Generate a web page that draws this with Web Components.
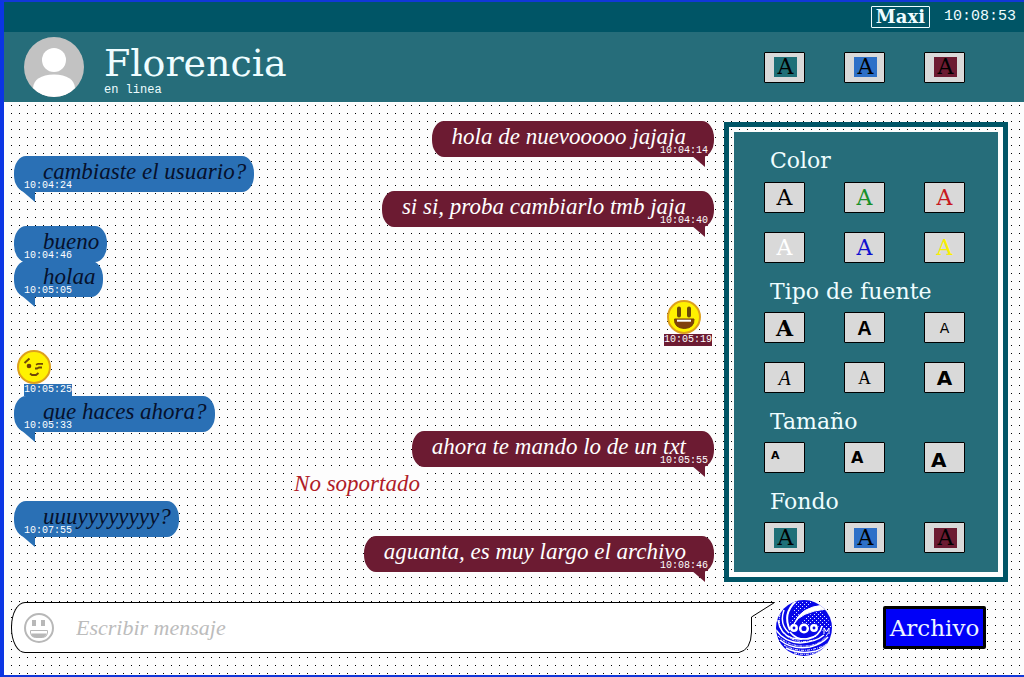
<!DOCTYPE html>
<html lang="es">
<head>
<meta charset="utf-8">
<meta name="viewport" content="width=device-width, initial-scale=1">
<title>Chat - Florencia</title>
<style>
  html, body { margin: 0; }
  body {
    --bar: #005566;
    --teal: #266d7a;
    --sent: #6c1b32;
    --received: #2a70b5;
    --pale: #effdff;
    --wide: "DejaVu Serif", serif;
    --hand: "Liberation Serif", serif;
    --mono: "Liberation Mono", monospace;
    font-family: var(--wide);
  }
</style>
</head>
<body>
<chat-app></chat-app>

<script>
class Base extends HTMLElement {
  connectedCallback() {
    if (this.shadowRoot) return;
    this.attachShadow({ mode: 'open' }).innerHTML =
      '<style>:host,*{box-sizing:border-box}' + this.styles() + '</style>' + this.markup();
  }
}

/* Small grey button that previews a colour, font, size or background */
class StyleButton extends Base {
  styles() {
    return `
    :host { display: block; }
    button { display: flex; align-items: center; justify-content: center; width: 41px; height: 31px; padding: 0;
      border: 1px solid #000; border-radius: 1px; background: #d9d9d9; color: var(--ink, #000);
      font: 22px/20px var(--wide); cursor: pointer; }
    button.fill span { background: var(--fill); width: 23px; height: 20px; text-align: center; margin-left: 2px; }
    button.f-wide { font-weight: bold; }
    button.f-sans { font: bold 20px/20px "Liberation Sans", sans-serif; }
    button.f-thin { font: 14px/20px "DejaVu Sans", sans-serif; }
    button.f-hand { font: italic 20px/20px var(--hand); }
    button.f-mono { font: 18px/20px "Liberation Serif", serif; }
    button.f-bold { font: bold 20px/20px "DejaVu Sans", sans-serif; }
    button.size { justify-content: flex-start; align-items: flex-start; padding: 7px 6px; font: bold 11px/11px "DejaVu Sans", sans-serif; }
    button.mid { font-size: 16px; line-height: 16px; }
    button.big { font-size: 20px; line-height: 20px; }`;
  }
  markup() {
    return `<button type="button" class="${this.getAttribute('kind') || ''}" aria-label="${this.getAttribute('label')}"><span>A</span></button>`;
  }
}

class ButtonRow extends Base {
  styles() { return `:host { display: grid; grid-template-columns: repeat(3, 41px); gap: 19px 39px; }`; }
  markup() { return `<slot></slot>`; }
}

const FILLS = `<button-row>
  <style-button kind="fill" label="Fondo verde" style="--fill:#1f7078"></style-button>
  <style-button kind="fill" label="Fondo azul" style="--fill:#2d70c8"></style-button>
  <style-button kind="fill" label="Fondo bordó" style="--fill:#6c1b32"></style-button>
</button-row>`;

class StylePanel extends Base {
  styles() {
    return `
    :host { display: block; border: 5px solid var(--bar); padding: 5px; }
    .inner { background: var(--teal); padding: 0 30px 19px; }
    h2 { margin: 0; height: 49px; padding: 14px 0 0 6px; color: var(--pale); font: 22px/30px var(--wide); white-space: nowrap; }
    section:first-child h2 { height: 50px; }`;
  }
  markup() {
    return `<div class="inner">
    <section><h2>Color</h2><button-row>
      <style-button label="Negro"></style-button>
      <style-button label="Verde" style="--ink:#189028"></style-button>
      <style-button label="Rojo" style="--ink:#c81820"></style-button>
      <style-button label="Blanco" style="--ink:#fff"></style-button>
      <style-button label="Azul" style="--ink:#1010d0"></style-button>
      <style-button label="Amarillo" style="--ink:#f8f000"></style-button>
    </button-row></section>
    <section><h2>Tipo de fuente</h2><button-row>
      <style-button kind="f-wide" label="Ancha"></style-button>
      <style-button kind="f-sans" label="Palo seco"></style-button>
      <style-button kind="f-thin" label="Fina"></style-button>
      <style-button kind="f-hand" label="Manuscrita"></style-button>
      <style-button kind="f-mono" label="Monoespaciada"></style-button>
      <style-button kind="f-bold" label="Negrita"></style-button>
    </button-row></section>
    <section><h2>Tamaño</h2><button-row>
      <style-button kind="size" label="Chico"></style-button>
      <style-button kind="size mid" label="Mediano"></style-button>
      <style-button kind="size big" label="Grande"></style-button>
    </button-row></section>
    <section><h2>Fondo</h2>${FILLS}</section>
    </div>`;
  }
}

/* Faces: grin, wink, and the grey outline used in the composer */
class ChatFace extends Base {
  styles() { return `:host { display: block; line-height: 0; } svg { display: block; width: 100%; height: 100%; }`; }
  markup() {
    const kind = this.getAttribute('kind');
    if (kind === 'outline') return `<svg viewBox="0 0 30 30" fill="none" stroke="#b8b8b8" aria-hidden="true">
      <circle cx="15" cy="15" r="14" stroke-width="2"/>
      <rect x="8" y="7" width="4" height="6" fill="#b8b8b8" stroke="none"/><rect x="17" y="7" width="4" height="6" fill="#b8b8b8" stroke="none"/>
      <path d="M6.500 17.500h17v3q-1 4-5 4h-7q-4 0-5-4z" stroke-width="1"/><path d="M7 20.500h16q-2 4-5 4h-6q-4 0-5-4z" fill="#b8b8b8" stroke="none"/></svg>`;
    const mouth = kind === 'grin'
      ? `<path d="M12 8.500v7M22 8.500v7" stroke="#6b4a08" stroke-width="4" stroke-linecap="round"/>
         <path d="M7.500 19h19.500q.5 9-9.700 9.500Q7 28 7.500 19z" fill="#80400c" stroke="#704008"/><path d="M10 20.700h14" stroke="#fff" stroke-width="2"/>`
      : `<path d="M7.500 13l5-4.500" stroke="#704808" stroke-width="2"/><circle cx="12" cy="16" r="2.300" fill="#704008"/>
         <path d="M18 18.500h2l2-1h3M19 14.800l2-1h5" stroke="#704808" stroke-width="1.800"/><path d="M13 23.500l2 1.500h4l2.500-2" stroke="#704808" stroke-width="2"/>`;
    return `<svg viewBox="0 0 34 34" fill="none" aria-hidden="true"><circle cx="17" cy="17" r="16" fill="#fff200" stroke="#dda01c" stroke-width="2"/>${mouth}</svg>`;
  }
}

class ChatMessage extends Base {
  styles() {
    return `
    :host { display: flex; height: 35px; --c: var(--received); color: #06102c; }
    :host([sent]) { justify-content: flex-end; --c: var(--sent); color: #fff; }
    .bubble { position: relative; height: 36px; border-radius: 12px / 17px; background: var(--c); padding: 0 8px 0 29px;
      font: italic 23px/32px var(--hand); white-space: nowrap; }
    :host([sent]) .bubble { padding: 0 28px 0 20px; }
    .bubble::after { content: ""; position: absolute; top: 34px; left: 7px; width: 14px; height: 12px; background: var(--c); clip-path: polygon(0 0, 100% 0, 100% 100%); }
    :host([sent]) .bubble::after { left: auto; right: 9px; }
    time { font: 10px/12px var(--mono); color: #fff; white-space: nowrap; }
    .bubble time { position: absolute; left: 10px; bottom: 1px; z-index: 1; background: var(--c); line-height: 10px; }
    :host([sent]) .bubble time { left: auto; right: 6px; }
    :host([face]) { height: 50px; }
    .face { display: flex; flex-direction: column; padding: 4px 0 0 10px; }
    :host([sent]) .face { padding: 4px 2px 0 0; }
    .face time { background: var(--c); }
    chat-face { width: 34px; height: 34px; margin-left: -7px; }
    :host([sent]) chat-face { margin-left: 3px; }`;
  }
  markup() {
    const face = this.getAttribute('face');
    const time = `<time>${this.getAttribute('time')}</time>`;
    return face ? `<div class="face"><chat-face kind="${face}"></chat-face>${time}</div>`
                : `<div class="bubble"><slot></slot>${time}</div>`;
  }
}

class ChatNotice extends Base {
  styles() {
    return `:host { display: flex; justify-content: center; align-items: center; height: 35px; padding-right: 14px; }
    span { background: #fdfdfd; color: #b01c28; font: italic 23px/24px var(--hand); }`;
  }
  markup() { return `<span><slot></slot></span>`; }
}

class ChatComposer extends Base {
  styles() {
    return `
    :host { display: block; }
    form { display: flex; align-items: center; }
    .box { flex: 1; min-width: 0; display: flex; align-items: center; height: 51px; padding-left: 12px; background: #fff;
      border: 1px solid #000; border-right: 0; border-radius: 14px 0 0 14px / 25px 0 0 25px; }
    .emoji { flex: none; width: 30px; height: 30px; padding: 0; border: 0; background: none; }
    chat-face { width: 30px; height: 30px; }
    input { flex: 1; min-width: 0; margin-left: 22px; padding: 0; border: 0; outline: 0; background: none; font: italic 22px/35px var(--hand); }
    input::placeholder { color: #bcbcbc; opacity: 1; }
    .beak { flex: none; display: block; }
    .logo { flex: none; width: 56px; height: 56px; margin: -3px 0 -3px 1px; padding: 0; border: 0; background: none; }
    .logo svg { display: block; }
    .file { flex: none; width: 103px; height: 43px; margin-left: 51px; padding: 0; border: 3px solid #000; border-radius: 2px;
      background: #0000f8; color: #eef6ff; font: 23px/30px var(--wide); white-space: nowrap; }`;
  }
  markup() {
    return `<form onsubmit="return false"><div class="box">
      <button class="emoji" type="button" aria-label="Emojis"><chat-face kind="outline"></chat-face></button>
      <input type="text" aria-label="Mensaje" placeholder="Escribir mensaje">
    </div>
    <svg class="beak" width="40" height="51" viewBox="0 0 40 51" aria-hidden="true">
      <path d="M0 .5H39.500L16.500 15V30Q16 48 4 50.500H0" fill="#fff" stroke="#000"/></svg>
    <button class="logo" type="submit" aria-label="Enviar">
      <svg width="56" height="56" viewBox="0 0 56 56" fill="none" aria-hidden="true">
        <defs><clipPath id="c"><circle cx="28" cy="28" r="28"/></clipPath>
        <pattern id="d" width="4" height="4" patternUnits="userSpaceOnUse"><path d="M0 0h1v1H0zM2 2h1v1H2z" fill="#dfe6ff"/></pattern></defs>
        <g clip-path="url(#c)" stroke="#fff">
          <rect width="56" height="56" fill="#0808e8" stroke="none"/>
          <path d="M20 2h18L24 12 17 26 14 24zM30 16l16-6 10 16-8 6-8-8-16 2z" fill="url(#d)" stroke="none"/>
          <path d="M20 1Q6 14 14 30" stroke-width="2"/>
          <path d="M48 5Q24 7 18 24Q24 12 50 9z" fill="#fff" stroke-width="1"/>
          <path d="M8 10Q3 24 13 33M2 20Q4 34 16 38Q28 41 40 36M0 30Q8 42 24 43Q40 42 48 35M4 40Q16 50 34 47Q46 44 52 37M10 48Q24 55 40 51Q48 48 55 41M14 32Q20 40 32 39Q44 36 46 26" stroke-width="1.500"/>
          <path d="M4 14Q1 30 12 37T38 40M2 36Q14 47 30 46T52 33M8 45Q22 53 38 49T56 38M18 53Q34 57 48 49" stroke-dasharray="3 1 1 1" stroke-width="1"/>
        </g>
        <g fill="#0808e8" stroke="#fff" stroke-width="2.500"><circle cx="18" cy="28" r="2.700"/><circle cx="28" cy="28.500" r="3.800"/><circle cx="38" cy="28" r="2.700"/></g>
        <path d="M48 34v-6l2.500 4 2.500-4v6" stroke="#fff"/>
      </svg></button>
    <button class="file" type="button">Archivo</button></form>`;
  }
}

class ChatApp extends Base {
  styles() {
    return `
    :host { display: flex; flex-direction: column; min-height: 100vh; border: solid #1238d8; border-width: 2px 0 2px 4px;
      border-left-color: #0b35e4; background: #fdfdfd; }
    .bar { display: flex; align-items: center; justify-content: flex-end; gap: 14px; height: 30px; padding-right: 8px; background: var(--bar); color: var(--pale); }
    .user { height: 22px; padding: 0 4px; border: 1px solid var(--pale); border-radius: 1px; background: none; color: inherit; font: bold 18px/20px var(--wide); }
    .bar time { font: 15px/20px var(--mono); }
    header { display: flex; align-items: center; height: 70px; padding: 0 59px 0 20px; background: var(--teal); color: var(--pale); }
    .avatar { flex: none; width: 60px; height: 60px; }
    .who { flex: 1; min-width: 0; padding: 6px 0 0 20px; }
    h1 { margin: 0; font: 38px/40px var(--wide); }
    .who p { margin: 0; font: 12px/14px var(--mono); }
    .body { flex: 1; background: conic-gradient(from 90deg at 7px 7px, #000 25%, transparent 0) 0 4px / 8px 8px; }
    main { display: grid; grid-template-columns: minmax(0, 1fr) 284px; column-gap: 10px; align-items: start; padding: 20px 16px 0 10px; }
    .messages { margin-top: -1px; }
    chat-composer { margin: 20px 38px 22px 7px; }`;
  }
  markup() {
    return `
    <div class="bar"><button class="user" type="button">Maxi</button><time>10:08:53</time></div>
    <header>
      <svg class="avatar" viewBox="0 0 60 60" aria-hidden="true"><defs><clipPath id="a"><circle cx="30" cy="30" r="30"/></clipPath></defs>
        <g clip-path="url(#a)"><rect width="60" height="60" fill="#c2c2c2"/><circle cx="30" cy="23" r="12" fill="#fff"/>
        <path d="M9 51Q10 38 30 37.500Q50 38 51 51Q44 60 30 60T9 51z" fill="#fff"/></g></svg>
      <div class="who"><h1>Florencia</h1><p>en linea</p></div>
      ${FILLS}
    </header>
    <div class="body">
      <main>
        <div class="messages">
          <chat-message sent time="10:04:14">hola de nuevooooo jajaja</chat-message>
          <chat-message time="10:04:24">cambiaste el usuario?</chat-message>
          <chat-message sent time="10:04:40">si si, proba cambiarlo tmb jaja</chat-message>
          <chat-message time="10:04:46">bueno</chat-message>
          <chat-message time="10:05:05">holaa</chat-message>
          <chat-message sent face="grin" time="10:05:19"></chat-message>
          <chat-message face="wink" time="10:05:25"></chat-message>
          <chat-message time="10:05:33">que haces ahora?</chat-message>
          <chat-message sent time="10:05:55">ahora te mando lo de un txt</chat-message>
          <chat-notice>No soportado</chat-notice>
          <chat-message time="10:07:55">uuuyyyyyyyy?</chat-message>
          <chat-message sent time="10:08:46">aguanta, es muy largo el archivo</chat-message>
        </div>
        <style-panel></style-panel>
      </main>
      <chat-composer></chat-composer>
    </div>`;
  }
}

customElements.define('style-button', StyleButton);
customElements.define('button-row', ButtonRow);
customElements.define('style-panel', StylePanel);
customElements.define('chat-face', ChatFace);
customElements.define('chat-message', ChatMessage);
customElements.define('chat-notice', ChatNotice);
customElements.define('chat-composer', ChatComposer);
customElements.define('chat-app', ChatApp);
</script>
</body>
</html>
